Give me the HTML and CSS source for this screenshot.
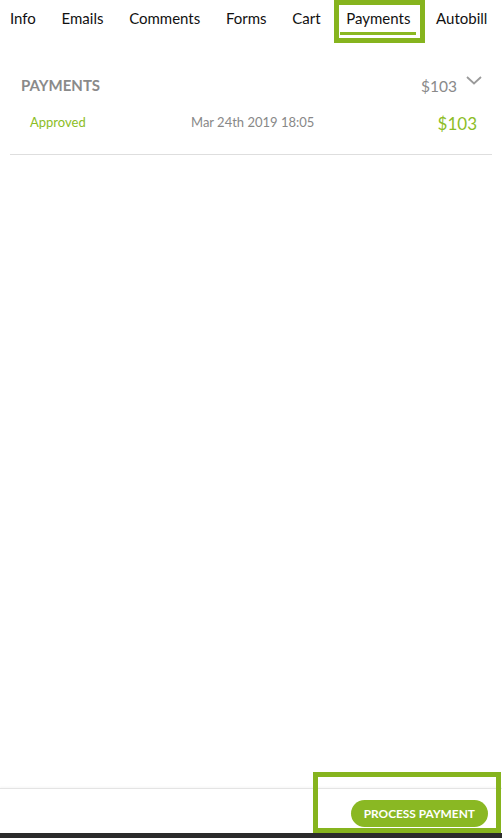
FILE: index.html
```html
<!DOCTYPE html>
<html>
<head>
<meta charset="utf-8">
<link rel="stylesheet" href="styles.css">
</head>
<body>
<div class="page">
  <nav class="tabs">
    <span class="tab">Info</span>
    <span class="tab">Emails</span>
    <span class="tab">Comments</span>
    <span class="tab">Forms</span>
    <span class="tab">Cart</span>
    <span class="tab active">Payments<span class="mark mark-tab"></span></span>
    <span class="tab">Autobill</span>
  </nav>
  <main class="content">
    <section class="payments">
      <div class="payments-head">
        <span class="title">PAYMENTS</span>
        <span class="total">$103</span>
        <svg class="chevron" width="16" height="9" viewBox="0 0 16 9"><path d="M1 1 L8 7.5 L15 1" fill="none" stroke="#9a9a9a" stroke-width="1.8"/></svg>
      </div>
      <div class="payment-row">
        <span class="status">Approved</span>
        <span class="date">Mar 24th 2019 18:05</span>
        <span class="amount">$103</span>
      </div>
    </section>
  </main>
  <footer class="footer">
    <button class="process">PROCESS PAYMENT</button>
    <span class="mark mark-footer"></span>
  </footer>
  <div class="bottom-bar"></div>
</div>
</body>
</html>
```
FILE: styles.css
```css
html, body {
  margin: 0;
  padding: 0;
  background: #fff;
}
body {
  font-family: Lato, "Open Sans", sans-serif;
}
.page {
  height: 838px;
  display: flex;
  flex-direction: column;
  overflow: hidden;
}
.tabs {
  display: flex;
  gap: 13.7px;
  padding-left: 4px;
  height: 35px;
}
.tab {
  position: relative;
  padding: 8px 6px 4px;
  line-height: 20px;
  font-size: 15px;
  color: #111;
  border-bottom: 3px solid transparent;
}
.tab.active {
  border-bottom-color: #8ab822;
}
.mark {
  position: absolute;
  border: 5px solid #86b41e;
  box-sizing: border-box;
  pointer-events: none;
}
.mark-tab {
  left: -6px;
  right: -9px;
  top: 0;
  bottom: -11px;
}
.content {
  flex: 1;
  padding: 0 10px;
}
.payments {
  padding-top: 40px;
  border-bottom: 1px solid #dedede;
  padding-bottom: 20px;
}
.payments-head {
  display: flex;
  align-items: center;
  height: 20px;
  padding-left: 11px;
  padding-right: 10px;
}
.title {
  font-weight: 700;
  font-size: 15px;
  color: #8a8a8a;
  line-height: 20px;
}
.total {
  margin-left: auto;
  font-size: 15.5px;
  color: #8a8a8a;
  line-height: 20px;
  position: relative;
  top: 1px;
}
.chevron {
  margin-left: 9px;
  position: relative;
  top: -5px;
}
.payment-row {
  display: grid;
  grid-template-columns: 161px 1fr auto;
  align-items: center;
  margin-top: 15px;
  height: 24px;
  padding-left: 20px;
  padding-right: 15px;
}
.status {
  font-size: 13px;
  color: #8cbd26;
}
.date {
  font-size: 13px;
  color: #888;
}
.amount {
  font-size: 17px;
  color: #8cbd26;
  position: relative;
  top: 1px;
}
.footer {
  position: relative;
  border-top: 1px solid #e4e4e4;
  box-shadow: 0 -1px 2px rgba(0,0,0,0.04);
  display: flex;
  justify-content: flex-end;
  align-items: flex-start;
  padding: 11px 14px 0 0;
  box-sizing: content-box;
  height: 33px;
}
.process {
  height: 27px;
  padding: 0 13px;
  border: none;
  border-radius: 14px;
  background: #8ab823;
  color: #fff;
  font-family: Lato, "Open Sans", sans-serif;
  font-weight: 700;
  font-size: 11.9px;
  letter-spacing: 0;
}
.mark-footer {
  left: 313px;
  right: 1px;
  top: -17px;
  bottom: 0;
}
.bottom-bar {
  height: 5px;
  background: #2b2b2b;
}
```
